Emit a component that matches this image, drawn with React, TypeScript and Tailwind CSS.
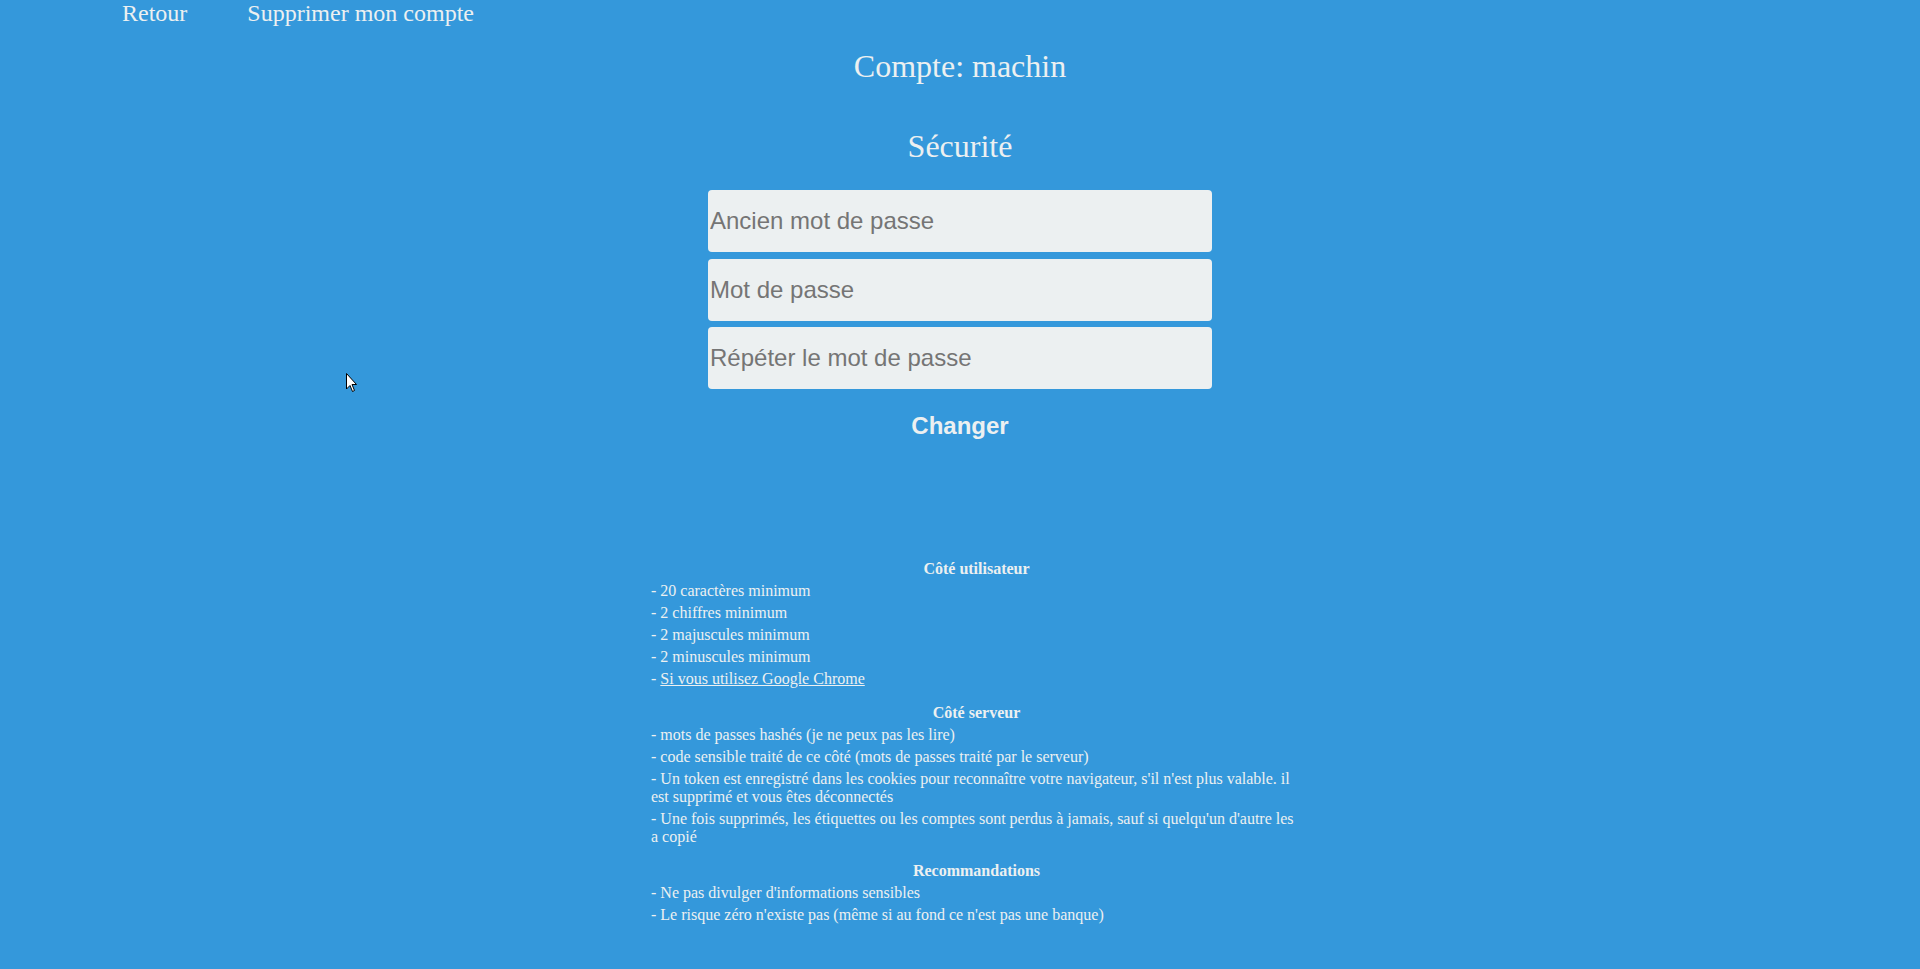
import React from "react";

const serif = "font-['Liberation_Serif','Times_New_Roman',serif]";

export const Section = ({
  title,
  first,
  children,
}: {
  title: string;
  first?: boolean;
  children: React.ReactNode;
}) => {
  return (
    <div className={first ? "" : "mt-4"}>
      <h3 className="text-center font-bold text-[16px] leading-[18px]">{title}</h3>
      {children}
    </div>
  );
};

export const Item = ({ children }: { children: React.ReactNode }) => {
  return <p className="mt-1 text-[16px] leading-[18px]">- {children}</p>;
};

export const Field = ({ placeholder, className }: { placeholder: string; className?: string }) => {
  return (
    <input
      type="password"
      placeholder={placeholder}
      className={
        "block w-[504px] h-[62px] mx-auto rounded bg-[#ecf0f1] px-[2px] text-[24px] font-['Liberation_Sans',Arial,sans-serif] text-[#333] placeholder:text-[#757575] outline-none " +
        (className ?? "")
      }
    />
  );
};

export default function App() {
  return (
    <div className={`relative h-[969px] overflow-hidden bg-[#3498db] text-[#ecf0f1] ${serif}`}>
      <nav className="flex gap-[60px] pl-[122px] text-[24px] leading-[27px]">
        <a href="#" className="hover:opacity-80">
          Retour
        </a>
        <a href="#" className="hover:opacity-80">
          Supprimer mon compte
        </a>
      </nav>

      <h1 className="mt-[21px] text-center text-[32px] leading-[37px]">Compte: machin</h1>
      <h2 className="mt-[43px] text-center text-[32px] leading-[37px]">Sécurité</h2>

      <form className="mt-[25px]" onSubmit={(e) => e.preventDefault()}>
        <Field placeholder="Ancien mot de passe" />
        <Field placeholder="Mot de passe" className="mt-[7px]" />
        <Field placeholder="Répéter le mot de passe" className="mt-[6px]" />
        <div className="mt-[23px] flex justify-center">
          <button
            type="submit"
            className="font-['Liberation_Sans',Arial,sans-serif] font-bold text-[24px] leading-[28px] text-[#ecf0f1]"
          >
            Changer
          </button>
        </div>
      </form>

      <div className="mt-[120px] ml-[651px] w-[651px]">
        <Section title="Côté utilisateur" first>
          <Item>20 caractères minimum</Item>
          <Item>2 chiffres minimum</Item>
          <Item>2 majuscules minimum</Item>
          <Item>2 minuscules minimum</Item>
          <Item>
            <a href="#" className="underline">
              Si vous utilisez Google Chrome
            </a>
          </Item>
        </Section>
        <Section title="Côté serveur">
          <Item>mots de passes hashés (je ne peux pas les lire)</Item>
          <Item>code sensible traité de ce côté (mots de passes traité par le serveur)</Item>
          <Item>
            Un token est enregistré dans les cookies pour reconnaître votre navigateur, s'il n'est plus valable. il
            est supprimé et vous êtes déconnectés
          </Item>
          <Item>
            Une fois supprimés, les étiquettes ou les comptes sont perdus à jamais, sauf si quelqu'un d'autre les a
            copié
          </Item>
        </Section>
        <Section title="Recommandations">
          <Item>Ne pas divulger d'informations sensibles</Item>
          <Item>Le risque zéro n'existe pas (même si au fond ce n'est pas une banque)</Item>
        </Section>
      </div>

      {/* mouse pointer captured in the screenshot */}
      <svg className="absolute left-[346px] top-[373px]" width="12" height="20" viewBox="0 0 12 20">
        <path d="M0.5 0.5 L0.5 16 L4 12.5 L6.5 18.5 L8.5 17.5 L6 11.5 L10.5 11.5 Z" fill="#fff" stroke="#000" strokeWidth="1" />
      </svg>
    </div>
  );
}
